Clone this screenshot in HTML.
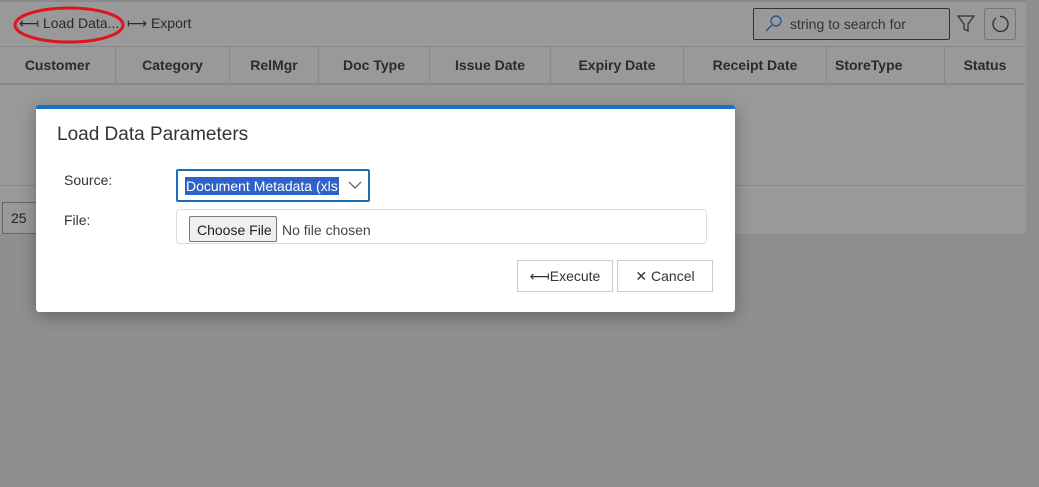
<!DOCTYPE html>
<html><head><style>
*{box-sizing:border-box;margin:0;padding:0}
body{width:1039px;height:487px;background:#8f8f90;font-family:"Liberation Sans",sans-serif;position:relative;overflow:hidden;color:#222}
.panel{position:absolute;left:0;top:0;width:1026px;height:234px;background:#999;border-radius:0 0 4px 0;border-top:2px solid #8a8a8a}
.tb{position:absolute;font-size:14px;color:#2a2a2a;top:15px}
.hdr{position:absolute;top:46px;left:0;width:1025px;height:39px;border-top:1px solid #888;border-bottom:2px solid #888;display:flex}
.hdr div{border-right:1px solid #888;font-weight:bold;font-size:14px;display:flex;align-items:center;justify-content:center;color:#2b2b2b}
.search{position:absolute;left:753px;top:8px;width:197px;height:32px;border:1px solid #333;border-radius:2px;font-size:14px;color:#333;padding:7px 0 0 36px}
.modal{position:absolute;left:36px;top:105px;width:699px;height:207px;background:#fff;border-top:4px solid #1a73c2;border-radius:3px;box-shadow:0 4px 16px rgba(0,0,0,.3)}
.in{position:absolute;left:0;top:-4px;width:699px;height:207px}
.btn{position:absolute;border:1px solid #ccc;background:#fff;font-size:14px;color:#333;display:flex;align-items:center;justify-content:center}
</style></head><body>
<div class="panel"></div>
<div class="tb" style="left:19px">⟻ Load Data...</div>
<div class="tb" style="left:127px">⟼ Export</div>
<svg style="position:absolute;left:13px;top:6px" width="113" height="38"><ellipse cx="56" cy="19" rx="54" ry="17" fill="none" stroke="#e0141c" stroke-width="3"/></svg>
<div class="search">string to search for</div>
<svg style="position:absolute;left:764px;top:14px" width="20" height="20"><circle cx="12" cy="7" r="5" fill="none" stroke="#2b5b8a" stroke-width="1.4"/><line x1="8.5" y1="10.5" x2="2" y2="17" stroke="#2b5b8a" stroke-width="1.5"/></svg>
<svg style="position:absolute;left:957px;top:14px" width="18" height="20"><path d="M1 2H17L11 10V17L7 15V10Z" fill="none" stroke="#333" stroke-width="1.3"/></svg>
<div style="position:absolute;left:984px;top:8px;width:32px;height:32px;border:1px solid #777;border-radius:3px"></div>
<svg style="position:absolute;left:990px;top:14px" width="20" height="20"><path d="M6 4A7.5 7.5 0 1 0 10 2.5" fill="none" stroke="#333" stroke-width="1.4"/></svg>
<div class="hdr">
<div style="width:116px">Customer</div><div style="width:114px">Category</div><div style="width:89px">RelMgr</div><div style="width:111px">Doc Type</div><div style="width:121px">Issue Date</div><div style="width:133px">Expiry Date</div><div style="width:143px">Receipt Date</div><div style="width:118px;justify-content:flex-start;padding-left:8px">StoreType</div><div style="width:80px;border-right:0">Status</div>
</div>
<div style="position:absolute;left:0;top:185px;width:1025px;border-top:1px solid #888"></div>
<div style="position:absolute;left:2px;top:202px;width:40px;height:32px;border:1px solid #666;font-size:14px;padding:7px 0 0 8px">25</div>
<div class="modal"><div class="in">
<div style="position:absolute;left:21px;top:19px;font-size:19px;color:#333">Load Data Parameters</div>
<div style="position:absolute;left:28px;top:67px;font-size:14px;color:#333">Source:</div>
<div style="position:absolute;left:28px;top:107px;font-size:14px;color:#333">File:</div>
<div style="position:absolute;left:140px;top:64px;width:194px;height:33px;border:2px solid #1a6fb5;border-radius:2px">
<span style="position:absolute;left:7px;top:6px;background:#2e62c8;color:#fff;font-size:14px;padding:1px 1px">Document Metadata (xls</span>
<svg style="position:absolute;left:170px;top:9px" width="14" height="10"><path d="M1 2L7 8L13 2" fill="none" stroke="#555" stroke-width="1.2"/></svg>
</div>
<div style="position:absolute;left:140px;top:104px;width:531px;height:35px;border:1px solid #ddd;border-radius:4px">
<div style="position:absolute;left:12px;top:6px;width:88px;height:26px;border:1px solid #777;background:#efefef;border-radius:2px;font-size:14px;padding:5px 0 0 7px">Choose File</div>
<span style="position:absolute;left:105px;top:12px;font-size:14px;color:#444">No file chosen</span>
</div>
<div class="btn" style="left:481px;top:155px;width:96px;height:32px">⟻Execute</div>
<div class="btn" style="left:581px;top:155px;width:96px;height:32px">✕ Cancel</div>
</div></div>
</body></html>
